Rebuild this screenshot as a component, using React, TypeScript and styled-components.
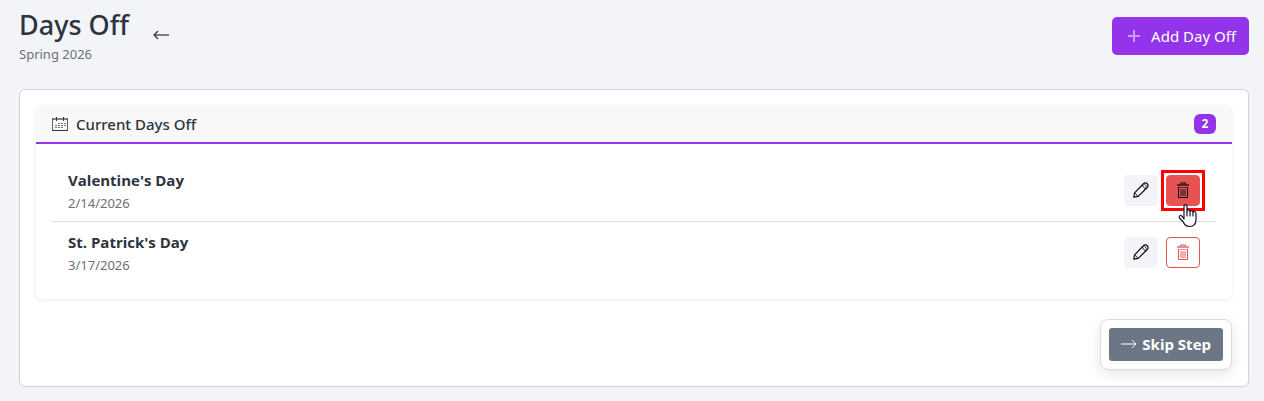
import React from "react";
import styled, { createGlobalStyle, css } from "styled-components";

const GlobalStyle = createGlobalStyle`
  *, *::before, *::after { box-sizing: border-box; }
  body {
    margin: 0;
    background: #f3f4f7;
    color: #2d333f;
    font-family: "Segoe UI", "Noto Sans", sans-serif;
    font-size: 15px;
    line-height: 24px;
  }
  button { font-family: inherit; cursor: pointer; }
  h1, h2, p, ul { margin: 0; padding: 0; }
`;

const Page = styled.main`
  padding: 7px 15px 14px 19px;
`;

const TopBar = styled.header`
  display: flex;
  justify-content: space-between;
  align-items: flex-start;
  padding-bottom: 24px;
`;

const Heading = styled.div`
  display: flex;
  align-items: center;
  gap: 24px;
`;

const Title = styled.h1`
  font-size: 27px;
  line-height: 36px;
  font-weight: 500;
`;

const Term = styled.p`
  font-size: 13px;
  line-height: 22px;
  color: #6b7078;
`;

const BackLink = styled.a`
  display: flex;
  color: #2b2f36;
`;

const AddButton = styled.button`
  display: flex;
  align-items: center;
  gap: 10px;
  height: 38px;
  margin-top: 10px;
  padding: 0 13px 0 15px;
  border: 0;
  border-radius: 5px;
  background: #9333ea;
  color: #fff;
  font-size: 15px;
  line-height: 24px;
`;

const Panel = styled.section`
  padding: 16px;
  border: 1px solid #d2d3d7;
  border-radius: 6px;
  background: #fff;
`;

const Card = styled.section`
  border-radius: 6px;
  background: #fff;
  box-shadow: 0 1px 4px rgba(0, 0, 0, 0.08);
`;

const CardHeader = styled.div`
  display: flex;
  align-items: center;
  gap: 8px;
  height: 38px;
  padding: 0 16px;
  border-bottom: 2px solid #9333ea;
  border-radius: 6px 6px 0 0;
  background: #f8f8f8;
`;

const CardTitle = styled.h2`
  flex: 1;
  font-size: 15px;
  line-height: 24px;
  font-weight: 500;
`;

const Count = styled.span`
  min-width: 22px;
  border-radius: 6px;
  background: #9333ea;
  color: #fff;
  font-size: 12px;
  line-height: 20px;
  font-weight: 700;
  text-align: center;
`;

const DayList = styled.ul`
  padding: 16px;
  list-style: none;
`;

const DayRow = styled.li`
  display: flex;
  align-items: center;
  justify-content: space-between;
  padding: 8px 16px;

  & + & { border-top: 1px solid #dcdde0; }
`;

const DayName = styled.p`
  font-family: "Segoe UI", "Open Sans", sans-serif;
  font-size: 15px;
  line-height: 24px;
  font-weight: 700;
`;

const DayDate = styled.p`
  padding-top: 1px;
  font-size: 13px;
  line-height: 20px;
  color: #6b7078;
`;

const Actions = styled.div`
  display: flex;
  gap: 8px;
`;

const IconButton = styled.button<{ $danger?: boolean; $active?: boolean }>`
  position: relative;
  display: flex;
  align-items: center;
  justify-content: center;
  width: 34px;
  height: 31px;
  padding: 0 0 1px;
  border: 1px solid #f3f4f7;
  border-radius: 4px;
  background: #f3f4f7;
  color: #0c0c10;
  ${(p) => p.$danger && css`
    border-color: #e55353;
    background: #fff;
    color: #e55353;
  `}
  ${(p) => p.$active && css`
    background: #e55353;
    color: #0c0c10;
  `}
`;

const Highlight = styled.span`
  position: absolute;
  inset: -6px;
  border: 3px solid #f00;
`;

const Pointer = styled.svg`
  position: absolute;
  left: 11px;
  top: 27px;
  z-index: 1;
`;

const Footer = styled.div`
  display: flex;
  justify-content: flex-end;
  margin-top: 20px;
`;

const SkipBox = styled.div`
  padding: 8px;
  border: 1px solid #dadce4;
  border-radius: 8px;
  background: #fff;
  box-shadow: 0 4px 14px rgba(0, 0, 0, 0.1);
`;

const SkipButton = styled.button`
  display: flex;
  align-items: center;
  gap: 5px;
  height: 33px;
  padding: 0 12px 1px;
  border: 0;
  border-radius: 3px;
  background: #6b7785;
  color: #fff;
  font-family: "Segoe UI", "Open Sans", sans-serif;
  font-size: 15px;
  line-height: 24px;
  font-weight: 700;
`;

const ArrowLeft = () => (
  <svg width="16" height="10" viewBox="0 0 16 10" fill="none" stroke="currentColor" aria-hidden="true">
    <path d="M1 4h15" strokeWidth="2" opacity="0.6" />
    <path d="M5 0 1 4l4 4" strokeWidth="1.2" />
  </svg>
);

const ArrowRight = () => (
  <svg width="16" height="12" viewBox="0 0 16 12" fill="none" stroke="currentColor" aria-hidden="true">
    <path d="M0 6h15" strokeWidth="2" opacity="0.5" />
    <path d="M11 2 15 6l-4 4" opacity="0.9" />
  </svg>
);

const Plus = () => (
  <svg width="14" height="14" viewBox="0 0 14 14" stroke="currentColor" strokeWidth="2" opacity="0.5" aria-hidden="true">
    <path d="M1 7h12M7 1v5M7 8v5" />
  </svg>
);

const Calendar = () => (
  <svg width="16" height="16" viewBox="0 0 16 16" fill="none" stroke="#2d333f" aria-hidden="true">
    <path d="M.5 3v11M15.5 3v11" opacity="0.75" />
    <path d="M0 3h16" strokeWidth="2" opacity="0.6" />
    <path d="M0 14.5h16M4.5 1v4M11.5 1v4" />
    <path d="M6 7.5h8M3 9.5h11M3 11.5h8" strokeDasharray="2 1" opacity="0.65" />
  </svg>
);

const Pencil = () => (
  <svg width="16" height="16" viewBox="0 0 16 16" fill="none" stroke="currentColor" strokeWidth="1.2" strokeLinejoin="round" aria-hidden="true">
    <path d="M.8 15.2 1.6 10.8 10.2 2c2.6-3 6.8 1 3.8 3.800L5.200 14.400z" />
    <path d="M9.500 2.800c.2 2 1.700 3.600 3.800 3.700M11.500 2.500c1 .6 1.600 1.200 2 2.200M1.800 11.500c1.300.2 2.400 1.300 2.700 2.700" strokeWidth="1" />
  </svg>
);

const Trash = () => (
  <svg width="14" height="16" viewBox="0 0 14 16" fill="none" stroke="currentColor" aria-hidden="true">
    <path d="M4.500 2.500V1h5v1.500" />
    <path d="M1 3h12" strokeWidth="2" opacity="0.65" />
    <path d="M2.500 5v10.500h9V5" />
    <path d="M2 5.500h10" opacity="0.6" />
    <path d="M5 7v7M7 7v7M9 7v7" strokeWidth="1.400" opacity="0.65" />
  </svg>
);

const HandPointer = () => (
  <Pointer width="20" height="27" viewBox="0 0 20 27" fill="#fff" stroke="#111528" strokeWidth="1.2" strokeLinejoin="round" strokeLinecap="round" aria-hidden="true">
    <path d="M6 16V3.500c0-2.400 3-2.400 3 0v4.500c0-1.600 3-1.300 3 .5 0-1.500 3-1.200 3 .7 0-1.300 3-1 3 1V16.500c0 4.500-2.500 7-6.500 7-3.500 0-5.200-2-6.200-4.500L1.500 15c-1-2.300 1.200-3.300 2.600-1.700z" />
    <path d="M9 8v5M12 8.500v4.500M15 9.200v3.800" />
  </Pointer>
);

const days = [
  { name: "Valentine's Day", date: "2/14/2026", active: true },
  { name: "St. Patrick's Day", date: "3/17/2026", active: false },
];

export default function App() {
  return (
    <>
      <GlobalStyle />
      <Page>
        <TopBar>
          <Heading>
            <div>
              <Title>Days Off</Title>
              <Term>Spring 2026</Term>
            </div>
            <BackLink href="#back" aria-label="Back"><ArrowLeft /></BackLink>
          </Heading>
          <AddButton type="button"><Plus />Add Day Off</AddButton>
        </TopBar>
        <Panel>
          <Card>
            <CardHeader>
              <Calendar />
              <CardTitle>Current Days Off</CardTitle>
              <Count>2</Count>
            </CardHeader>
            <DayList>
              {days.map((day) => (
                <DayRow key={day.name}>
                  <div>
                    <DayName>{day.name}</DayName>
                    <DayDate>{day.date}</DayDate>
                  </div>
                  <Actions>
                    <IconButton type="button" aria-label={`Edit ${day.name}`}><Pencil /></IconButton>
                    <IconButton type="button" $danger $active={day.active} aria-label={`Delete ${day.name}`}>
                      <Trash />
                      {day.active && <><Highlight /><HandPointer /></>}
                    </IconButton>
                  </Actions>
                </DayRow>
              ))}
            </DayList>
          </Card>
          <Footer>
            <SkipBox>
              <SkipButton type="button"><ArrowRight />Skip Step</SkipButton>
            </SkipBox>
          </Footer>
        </Panel>
      </Page>
    </>
  );
}
